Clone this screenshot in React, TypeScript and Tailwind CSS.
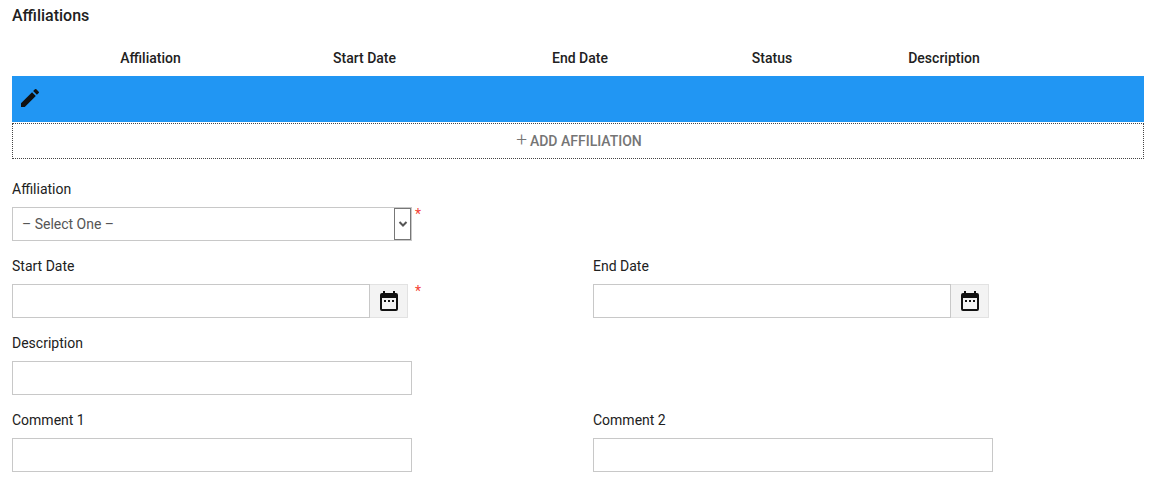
const columns = [
    { label: 'Affiliation', className: 'w-[277px]' },
    { label: 'Start Date', className: 'w-[151px]' },
    { label: 'End Date', className: 'w-[280px]' },
    { label: 'Status', className: 'w-[104px]' },
    { label: 'Description', className: 'w-[240px]' },
];

function PencilIcon() {
    return (
        <svg width="24" height="24" viewBox="0 0 24 24" fill="#111">
            <path d="M3 17.25V21h3.75L17.81 9.94l-3.75-3.75L3 17.25zM20.71 7.04a1 1 0 0 0 0-1.41l-2.34-2.34a1 1 0 0 0-1.41 0l-1.83 1.83 3.75 3.75 1.83-1.83z" />
        </svg>
    );
}

function CalendarIcon() {
    return (
        <svg width="24" height="24" viewBox="0 0 24 24" fill="#111">
            <path d="M19 4h-1V2h-2v2H8V2H6v2H5a2 2 0 0 0-2 2v14a2 2 0 0 0 2 2h14a2 2 0 0 0 2-2V6a2 2 0 0 0-2-2zm0 16H5V9h14v11zM7 11h2v2H7v-2zm4 0h2v2h-2v-2zm4 0h2v2h-2v-2z" />
        </svg>
    );
}

function Required({ className }: { className: string }) {
    return <span className={`${className} -mt-[3px] text-[14px] leading-[20px] text-[#f44336] self-start`}>*</span>;
}

function Field({ label, children }: { label: string; children: React.ReactNode }) {
    return (
        <div>
            <label className="block h-[20px] text-[14px] leading-[20px] text-[#212121]">{label}</label>
            <div className="mt-[8px] flex">{children}</div>
        </div>
    );
}

function TextInput() {
    return <input className="w-[400px] h-[34px] border border-[#c8c8c8] bg-white outline-none" />;
}

function DateInput() {
    return (
        <>
            <input className="w-[358px] h-[34px] border border-[#c8c8c8] bg-white outline-none" />
            <div className="w-[38px] h-[34px] flex items-center justify-center bg-[#f3f3f3] border border-l-0 border-[#e2e2e2]">
                <CalendarIcon />
            </div>
        </>
    );
}

export default function App() {
    return (
        <div className="w-[1153px] h-[488px] overflow-hidden bg-white pl-[12px] pr-[9px] pt-[6px] font-['Roboto',sans-serif] text-[#212121]">
            <h2 className="text-[16px] leading-[20px] font-medium">Affiliations</h2>
            <div className="mt-[20px] flex h-[24px] items-center text-[14px] font-medium">
                {columns.map((col) => (
                    <div key={col.label} className={`${col.className} text-center`}>
                        {col.label}
                    </div>
                ))}
            </div>
            <div className="mt-[6px] h-[46px] flex items-center pl-[6px] pb-[2px] bg-[#2196f3]">
                <PencilIcon />
            </div>
            <div className="mt-px h-[36px] flex items-center justify-center border border-dotted border-[#444] text-[14px] font-medium text-[#757575]">
                <span className="text-[19px] leading-[20px] font-light ml-[2px] mr-[3px] -mt-[2px]">+</span>
                ADD AFFILIATION
            </div>
            <div className="mt-[20px]">
                <Field label="Affiliation">
                    <div className="relative w-[400px] h-[34px] border border-[#c8c8c8] flex items-center pl-[9px] text-[14px] text-[#555]">
                        – Select One –
                        <div className="absolute right-0 top-0 w-[17px] h-[32px] flex items-center justify-center border border-[#777] bg-white">
                            <svg width="10" height="10" viewBox="0 0 10 10" fill="none" stroke="#555" strokeWidth="2">
                                <path d="M1.5 3L5 6.5 8.5 3" />
                            </svg>
                        </div>
                    </div>
                    <Required className="ml-[3px]" />
                </Field>
            </div>
            <div className="mt-[15px] flex">
                <div className="w-[581px]">
                    <Field label="Start Date">
                        <DateInput />
                        <Required className="ml-[7px]" />
                    </Field>
                </div>
                <Field label="End Date">
                    <DateInput />
                </Field>
            </div>
            <div className="mt-[15px]">
                <Field label="Description">
                    <TextInput />
                </Field>
            </div>
            <div className="mt-[15px] flex">
                <div className="w-[581px]">
                    <Field label="Comment 1">
                        <TextInput />
                    </Field>
                </div>
                <Field label="Comment 2">
                    <TextInput />
                </Field>
            </div>
        </div>
    );
}
